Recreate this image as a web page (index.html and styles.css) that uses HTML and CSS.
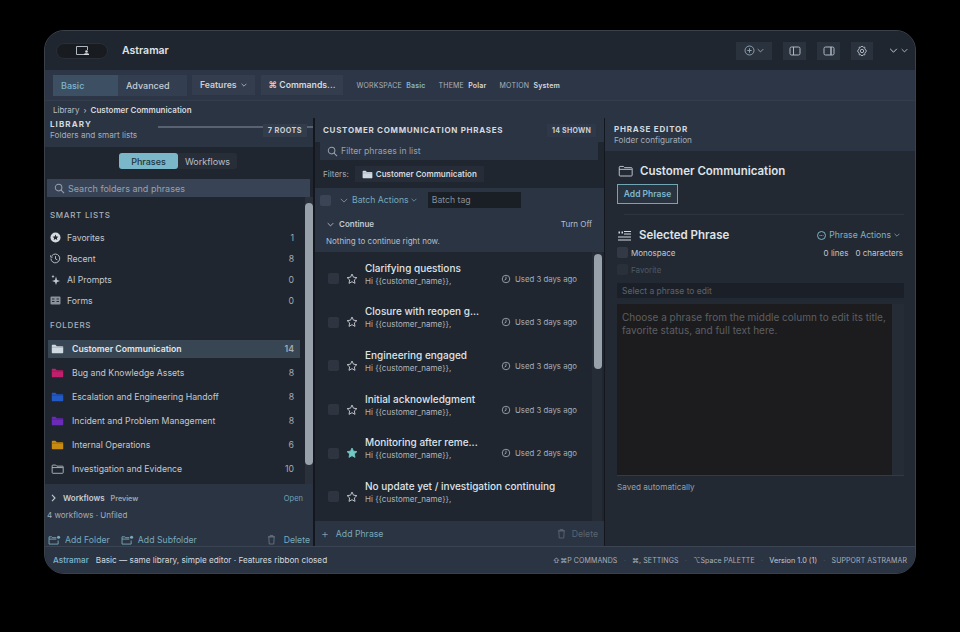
FILE: index.html
```html
<!DOCTYPE html>
<html lang="en">
<head>
  <meta charset="UTF-8" />
  <title>Astramar</title>
  <link rel="stylesheet" href="styles.css">
</head>
<body>
  <svg class="defs" width="0" height="0">
    <symbol id="folder" viewBox="0 0 18 14"><path d="M1 3V2a1 1 0 0 1 1-1h4l2 2h8a1 1 0 0 1 1 1v8a1 1 0 0 1-1 1H2a1 1 0 0 1-1-1z" fill="currentColor"/><path d="M1 4.500h16" stroke="#00000040"/></symbol>
    <symbol id="folder-line" viewBox="0 0 18 14"><path d="M1.500 12V2.500a1 1 0 0 1 1-1h4l1.500 1.500h8a1 1 0 0 1 1 1V12a1 1 0 0 1-1 1h-13.500a1 1 0 0 1-1-1zM1.500 5h15" fill="none" stroke="currentColor" stroke-width="1.100"/></symbol>
    <symbol id="star" viewBox="0 0 14 14"><path d="M7 1.200l1.700 3.700 4 .5-3 2.700.8 4L7 10.100l-3.500 2 .8-4-3-2.700 4-.5z" fill="none" stroke="currentColor" stroke-width="1.100" stroke-linejoin="round"/></symbol>
    <symbol id="star-fill" viewBox="0 0 14 14"><path d="M7 1.200l1.700 3.700 4 .5-3 2.700.8 4L7 10.100l-3.500 2 .8-4-3-2.700 4-.5z" fill="currentColor" stroke="currentColor" stroke-linejoin="round"/></symbol>
    <symbol id="clock" viewBox="0 0 12 12"><circle cx="6" cy="6" r="4.500" fill="none" stroke="currentColor"/><path d="M6 3.200V6.300L4.200 7.300" fill="none" stroke="currentColor"/></symbol>
    <symbol id="search" viewBox="0 0 12 12"><circle cx="5" cy="5" r="3.600" fill="none" stroke="currentColor" stroke-width="1.100"/><path d="M7.700 7.700L11 11" stroke="currentColor" stroke-width="1.100"/></symbol>
    <symbol id="chev" viewBox="0 0 10 6"><path d="M1 1l4 4 4-4" fill="none" stroke="currentColor" stroke-width="1.200"/></symbol>
    <symbol id="add-folder" viewBox="0 0 14 11"><path d="M1 10V2h3l1 1h4M1 4.500h8M1 10h10V6" fill="none" stroke="currentColor"/><circle cx="11.500" cy="2.500" r="1.700" fill="currentColor"/></symbol>
    <symbol id="trash" viewBox="0 0 10 12"><path d="M1 3h8M3.500 3V1.500h3V3M2 3l.5 8h5L8 3z" fill="none" stroke="currentColor"/></symbol>
  </svg>

  <div class="window">
    <header class="titlebar">
      <div class="sidebar-pill">
        <svg width="15" height="11" viewBox="0 0 15 11"><path d="M10 9.500H1.500v-8h11V5" fill="none" stroke="#aeb6c0"/><circle cx="11.500" cy="6.500" r="1.300" fill="#d5dae0"/><path d="M9 10h5V9l-1-.8h-3L9 9z" fill="#d5dae0"/></svg>
      </div>
      <div class="app-name">Astramar</div>
      <div class="title-tools">
        <div class="tool tool-wide">
          <svg width="11" height="11" viewBox="0 0 11 11"><circle cx="5.500" cy="5.500" r="4.500" fill="none" stroke="#8c9fb0"/><path d="M5.500 3.300v4.400M3.300 5.500h4.400" stroke="#8c9fb0"/></svg>
          <svg class="chev-sm" width="7" height="5"><use href="#chev"/></svg>
        </div>
        <div class="tool"><svg width="12" height="10" viewBox="0 0 12 10"><rect x="1" y="1" width="10" height="8" rx="1.500" fill="none" stroke="#aeb6c0"/><path d="M4.500 1v8" stroke="#aeb6c0"/></svg></div>
        <div class="tool"><svg width="12" height="10" viewBox="0 0 12 10"><rect x="1" y="1" width="10" height="8" rx="1.500" fill="none" stroke="#aeb6c0"/><path d="M8 1v8" stroke="#aeb6c0" stroke-width="1.500"/></svg></div>
        <div class="tool tool-gear"><svg width="12" height="12" viewBox="0 0 12 12"><circle cx="6" cy="6" r="1.700" fill="none" stroke="#aeb6c0"/><path d="M6 1l1.200 1.200h1.600v1.600L10.500 6 8.800 8.200v1.600H7.200L6 11 4.800 9.800H3.200V8.200L1.500 6l1.700-2.200V2.200h1.600z" fill="none" stroke="#aeb6c0"/></svg></div>
        <div class="win-chevs">
          <svg width="9" height="5"><use href="#chev"/></svg>
          <svg width="7" height="5"><use href="#chev"/></svg>
        </div>
      </div>
    </header>

    <div class="ribbon">
      <div class="segment"><span class="seg seg-on">Basic</span><span class="seg">Advanced</span></div>
      <div class="rib-btn">Features <svg class="chev-sm" width="6" height="4"><use href="#chev"/></svg></div>
      <div class="rib-btn rib-cmd">⌘ Commands...</div>
      <div class="rib-meta">WORKSPACE <b class="accent">Basic</b></div>
      <div class="rib-meta">THEME <b>Polar</b></div>
      <div class="rib-meta">MOTION <b>System</b></div>
    </div>

    <div class="crumbs"><span>Library</span><span class="crumb-sep">›</span><b>Customer Communication</b></div>

    <main class="columns">
      <section class="col col-left">
        <div class="col-head">
          <div>
            <div class="head-title">LIBRARY</div>
            <div class="head-sub">Folders and smart lists</div>
          </div>
          <div class="head-rule"></div>
          <div class="head-badge">7 ROOTS</div>
        </div>
        <div class="tabs"><span class="tab tab-on">Phrases</span><span class="tab">Workflows</span></div>
        <div class="lib-search">
          <svg width="11" height="11"><use href="#search"/></svg>Search folders and phrases
        </div>
        <div class="lib-scroll">
          <div class="lib-list">
            <div class="group-label">SMART LISTS</div>
            <div class="smart-row">
              <svg width="11" height="11" viewBox="0 0 11 11"><circle cx="5.500" cy="5.500" r="5" fill="#d5dae0"/><path d="M5.500 2.600l.9 1.900 2 .2-1.500 1.400.4 2-1.800-1-1.800 1 .4-2L2.600 4.700l2-.2z" fill="#20262f"/></svg>
              <span class="row-name">Favorites</span><span class="row-num">1</span>
            </div>
            <div class="smart-row">
              <svg width="11" height="11" viewBox="0 0 12 12"><path d="M2 3a4.800 4.800 0 1 1-1 3M.8 2.500V4.500h2" fill="none" stroke="#c3c9d0"/><path d="M6 3.400v3l2 1" fill="none" stroke="#c3c9d0"/></svg>
              <span class="row-name">Recent</span><span class="row-num">8</span>
            </div>
            <div class="smart-row">
              <svg width="11" height="11" viewBox="0 0 11 11"><path d="M6 2.500L7 6l3 1-3 1-1 3-1-3-3-1 3-1zM3 .8l.5 1.300 1 .4-1 .4L3 4.200l-.5-1.300-1-.4 1-.4z" fill="#c3c9d0"/></svg>
              <span class="row-name">AI Prompts</span><span class="row-num">0</span>
            </div>
            <div class="smart-row">
              <svg width="11" height="9" viewBox="0 0 11 9"><rect x=".5" y=".5" width="10" height="8" rx="1" fill="#8b929b"/><path d="M2 3h2.500M2 5.500h2.500M6.500 3H9M6.500 5.500H9" stroke="#262c35"/></svg>
              <span class="row-name">Forms</span><span class="row-num">0</span>
            </div>
            <div class="group-label group-folders">FOLDERS</div>
            <div class="folder-row folder-on">
              <svg class="f-white" width="13" height="10"><use href="#folder"/></svg>
              <span class="row-name">Customer Communication</span><span class="row-num">14</span>
            </div>
            <div class="folder-row">
              <svg class="f-pink" width="13" height="10"><use href="#folder"/></svg>
              <span class="row-name">Bug and Knowledge Assets</span><span class="row-num">8</span>
            </div>
            <div class="folder-row">
              <svg class="f-blue" width="13" height="10"><use href="#folder"/></svg>
              <span class="row-name">Escalation and Engineering Handoff</span><span class="row-num">8</span>
            </div>
            <div class="folder-row">
              <svg class="f-purple" width="13" height="10"><use href="#folder"/></svg>
              <span class="row-name">Incident and Problem Management</span><span class="row-num">8</span>
            </div>
            <div class="folder-row">
              <svg class="f-amber" width="13" height="10"><use href="#folder"/></svg>
              <span class="row-name">Internal Operations</span><span class="row-num">6</span>
            </div>
            <div class="folder-row">
              <svg class="f-line" width="13" height="10"><use href="#folder-line"/></svg>
              <span class="row-name">Investigation and Evidence</span><span class="row-num">10</span>
            </div>
          </div>
          <div class="lib-bar"><div class="lib-thumb"></div></div>
        </div>
        <div class="workflows">
          <div class="wf-top">
            <svg class="wf-chev" width="5" height="8" viewBox="0 0 5 8"><path d="M1 .8L4 4 1 7.200" fill="none" stroke="#c3c9d0" stroke-width="1.100"/></svg>
            <b>Workflows</b><span class="wf-tag">Preview</span><span class="wf-open">Open</span>
          </div>
          <div class="wf-sub">4 workflows · Unfiled</div>
          <div class="lib-actions">
            <span class="act"><svg width="13" height="10"><use href="#add-folder"/></svg>Add Folder</span>
            <span class="act"><svg width="13" height="10"><use href="#add-folder"/></svg>Add Subfolder</span>
            <span class="act act-del"><svg class="icon-grey" width="9" height="11"><use href="#trash"/></svg>Delete</span>
          </div>
        </div>
      </section>

      <section class="col col-mid">
        <div class="mid-head">
          <div class="head-title">CUSTOMER COMMUNICATION PHRASES</div>
          <div class="head-badge">14 SHOWN</div>
        </div>
        <div class="mid-search"><svg width="11" height="11"><use href="#search"/></svg>Filter phrases in list</div>
        <div class="filters">
          <span>Filters:</span>
          <span class="filter-chip"><svg class="f-white" width="11" height="9"><use href="#folder"/></svg>Customer Communication</span>
        </div>
        <div class="batch">
          <span class="check check-batch"></span>
          <svg class="chev-batch" width="8" height="5"><use href="#chev"/></svg>
          <span class="batch-label">Batch Actions</span>
          <svg class="chev-accent" width="6" height="4"><use href="#chev"/></svg>
          <span class="batch-tag">Batch tag</span>
        </div>
        <div class="continue">
          <div class="continue-top">
            <svg width="7" height="5"><use href="#chev"/></svg><b>Continue</b><span class="turn-off">Turn Off</span>
          </div>
          <div class="continue-note">Nothing to continue right now.</div>
        </div>
        <div class="phrase-scroll">
          <div class="phrases" id="phrases"></div>
          <div class="phrase-bar"><div class="phrase-thumb"></div></div>
        </div>
        <div class="mid-foot">
          <span class="add-phrase"><span class="plus">+</span>Add Phrase</span>
          <span class="del-off"><svg width="9" height="11"><use href="#trash"/></svg>Delete</span>
        </div>
      </section>

      <section class="col col-right">
        <div class="right-head">
          <div class="head-title">PHRASE EDITOR</div>
          <div class="head-sub">Folder configuration</div>
        </div>
        <div class="right-body">
          <div class="folder-title"><svg class="f-line" width="15" height="12"><use href="#folder-line"/></svg>Customer Communication</div>
          <div class="add-btn">Add Phrase</div>
          <div class="divider"></div>
          <div class="selected-top">
            <svg width="13" height="11" viewBox="0 0 13 11"><path d="M6 1.500h7M6 4h7M0 7h13M0 10h13" stroke="#d5dae0" stroke-width="1.100"/><path d="M.5 1.500h1.500v2H.5zM3.500 1.500h1.500v2H3.500z" fill="#d5dae0"/></svg>
            <span class="selected-title">Selected Phrase</span>
            <span class="phrase-actions">
              <svg width="9" height="9" viewBox="0 0 9 9"><circle cx="4.500" cy="4.500" r="4" fill="none" stroke="#7fb3c4"/><path d="M2.500 4.500h4" stroke="#7fb3c4" stroke-dasharray="1 .8"/></svg>
              Phrase Actions
              <svg width="6" height="4"><use href="#chev"/></svg>
            </span>
          </div>
          <div class="opt-row">
            <span class="check check-sm"></span><span>Monospace</span>
            <span class="counts"><span>0 lines</span><span>0 characters</span></span>
          </div>
          <div class="opt-row opt-off"><span class="check check-sm check-dim"></span><span>Favorite</span></div>
          <div class="title-field">Select a phrase to edit</div>
          <div class="text-field">
            <div class="text-area">Choose a phrase from the middle column to edit its title, favorite status, and full text here.</div>
            <div class="text-bar"></div>
          </div>
          <div class="saved">Saved automatically</div>
        </div>
      </section>
    </main>

    <footer class="statusbar">
      <span class="st-name">Astramar</span>
      <span class="st-msg">Basic — same library, simple editor · Features ribbon closed</span>
      <span class="st-right">
        <span>⇧⌘P COMMANDS</span><i>·</i><span>⌘, SETTINGS</span><i>·</i><span>⌥Space PALETTE</span><i>·</i><span class="st-ver">Version 1.0 (1)</span><i>·</i><span>SUPPORT ASTRAMAR</span>
      </span>
    </footer>
  </div>

  <script>
    const items = [
      ['Clarifying questions', '3', false],
      ['Closure with reopen g...', '3', false],
      ['Engineering engaged', '3', false],
      ['Initial acknowledgment', '3', false],
      ['Monitoring after reme...', '2', true],
      ['No update yet / investigation continuing', '', false]
    ];
    document.getElementById('phrases').innerHTML = items.map(p => `
      <div class="phrase">
        <span class="check"></span>
        <svg class="${p[2] ? 'star-on' : 'star'}" width="12" height="12"><use href="#${p[2] ? 'star-fill' : 'star'}"/></svg>
        <div class="phrase-text">
          <div class="phrase-title">${p[0]}</div>
          <div class="phrase-sub">Hi {{customer_name}},</div>
        </div>
        ${p[1] ? `<div class="used"><svg width="10" height="10"><use href="#clock"/></svg>Used ${p[1]} days ago</div>` : ''}
      </div>`).join('');
  </script>
</body>
</html>
```

FILE: styles.css
```css
* {
  box-sizing: border-box;
}
html, body {
  height: 100%;
}
body {
  margin: 0;
  background: #000;
  font-family: Inter, "Liberation Sans", sans-serif;
  color: #c9ced5;
  font-size: 8.700px;
  padding: 30px 44px 58px;
  overflow: hidden;
}
.defs {
  position: absolute;
}
b {
  font-weight: 600;
}
.window {
  width: 872px;
  height: 544px;
  border-radius: 20px;
  overflow: hidden;
  background: #222933;
  border: 1px solid #3b4149;
  display: flex;
  flex-direction: column;
}

/* title bar */
.titlebar {
  height: 39px;
  flex: none;
  background: #20262f;
  display: flex;
  align-items: center;
  padding-left: 11px;
}
.sidebar-pill {
  width: 52px;
  height: 16px;
  background: #181b20;
  border-radius: 8px;
  border: 1px solid #2a2f37;
  display: flex;
  align-items: center;
  justify-content: center;
}
.app-name {
  margin-left: 14px;
  font-size: 10.500px;
  font-weight: 600;
  color: #dfe3e8;
}
.title-tools {
  margin-left: auto;
  display: flex;
  align-items: center;
  gap: 11px;
  padding-right: 7px;
}
.tool {
  width: 23px;
  height: 18px;
  background: #2a323e;
  display: flex;
  align-items: center;
  justify-content: center;
  gap: 2px;
  color: #a8b2bd;
}
.tool-wide {
  width: 36px;
}
.tool-gear {
  width: 22px;
}
.win-chevs {
  display: flex;
  align-items: center;
  gap: 3px;
  margin-left: 5px;
  color: #c3c9d0;
}

/* ribbon */
.ribbon {
  height: 30px;
  flex: none;
  background: #2d3646;
  display: flex;
  align-items: center;
  padding-left: 8px;
}
.segment {
  display: flex;
  height: 21px;
  width: 134px;
  background: #333e50;
  font-size: 9px;
  font-weight: 500;
}
.seg {
  flex: 1;
  display: flex;
  align-items: center;
  padding-left: 8px;
}
.seg-on {
  flex: none;
  width: 65px;
  background: #3d5063;
  color: #7fb7cf;
}
.rib-btn {
  height: 20px;
  margin-left: 5px;
  padding: 0 8px;
  background: #333d4e;
  display: flex;
  align-items: center;
  gap: 4px;
  font-weight: 600;
  color: #c9ced5;
}
.rib-cmd {
  margin-left: 6px;
  color: #d5d9de;
}
.rib-meta {
  margin-left: 13px;
  font-size: 7px;
  letter-spacing: .2px;
  color: #aab2bc;
  white-space: nowrap;
}
.rib-meta b {
  margin-left: 2px;
  color: #d5d9de;
}
.rib-meta .accent {
  color: #7fb7cf;
}

/* breadcrumbs */
.crumbs {
  height: 18px;
  flex: none;
  background: #2b3443;
  display: flex;
  align-items: center;
  gap: 4px;
  padding-left: 8px;
  font-size: 8px;
  color: #b9bfc7;
  border-top: 1px solid #343d4c;
}
.crumbs b {
  color: #d5d9de;
}

/* columns */
.columns {
  flex: 1;
  min-height: 0;
  display: flex;
}
.col {
  display: flex;
  flex-direction: column;
  min-height: 0;
}
.col-left {
  width: 270px;
  background: #20262f;
  border-right: 2px solid #14181e;
}
.col-mid {
  width: 290px;
  background: #20262f;
  border-right: 1px solid #14181e;
}
.col-right {
  flex: 1;
  background: #222933;
}
.col-head {
  height: 29px;
  flex: none;
  background: #2b3443;
  display: flex;
  align-items: flex-start;
  padding: 1px 6px 0 5px;
  position: relative;
}
.head-title {
  font-size: 8px;
  font-weight: 700;
  letter-spacing: 1.100px;
  color: #d5d9de;
  white-space: nowrap;
}
.head-sub {
  margin-top: 1px;
  font-size: 8.200px;
  color: #a6adb6;
}
.head-rule {
  position: absolute;
  left: 113px;
  right: 0;
  top: 8px;
  height: 2px;
  background: #596270;
}
.head-badge {
  margin-left: auto;
  margin-top: 5px;
  background: #323c4b;
  padding: 2px 5px;
  font-size: 7.300px;
  font-weight: 700;
  letter-spacing: .4px;
  color: #c9ced5;
  white-space: nowrap;
  position: relative;
}
.tabs {
  display: flex;
  justify-content: center;
  padding: 6px 2px 0 0;
  flex: none;
}
.tab {
  width: 59px;
  height: 16px;
  display: flex;
  align-items: center;
  justify-content: center;
  background: #282e38;
  font-size: 9px;
  color: #b9bfc7;
  border-radius: 0 3px 3px 0;
}
.tab-on {
  background: #7ab8c9;
  color: #1d3540;
  border-radius: 3px;
  font-weight: 500;
}
.lib-search {
  height: 18px;
  flex: none;
  margin: 10px 3px 0 2px;
  background: #394356;
  display: flex;
  align-items: center;
  gap: 3px;
  padding-left: 7px;
  font-size: 9px;
  color: #98a1ac;
}
.lib-scroll {
  flex: 1;
  min-height: 0;
  display: flex;
  overflow: hidden;
}
.lib-list {
  flex: 1;
  min-width: 0;
  padding-top: 11px;
}
.group-label {
  font-size: 8px;
  font-weight: 500;
  letter-spacing: .7px;
  color: #a9b0b9;
  padding: 2px 0 0 5px;
  height: 15px;
}
.group-folders {
  margin-top: 7px;
}
.smart-row {
  height: 21px;
  display: flex;
  align-items: center;
  padding: 0 11px 0 5px;
  gap: 6px;
  color: #c3c8cf;
}
.group-label + .smart-row {
  margin-top: 4px;
}
.row-name {
  flex: 1;
  white-space: nowrap;
}
.row-num {
  color: #a4abb4;
}
.folder-row {
  height: 24px;
  margin: 0 5px 0 3px;
  padding: 0 6px 0 3px;
  display: flex;
  align-items: center;
  gap: 8px;
  color: #c3c8cf;
}
.group-folders + .folder-row {
  margin-top: 7px;
  height: 18px;
}
.group-folders + .folder-row + .folder-row {
  margin-top: 3px;
}
.folder-on {
  background: #384653;
  color: #e0e4e8;
  font-weight: 600;
}
.f-white { color: #cfd9e2; }
.f-pink { color: #c01f6d; }
.f-blue { color: #2259c4; }
.f-purple { color: #6a2cb8; }
.f-amber { color: #c98a12; }
.f-line { color: #c9ced5; }
.lib-bar {
  width: 8px;
  flex: none;
  background: #2a313b;
}
.lib-thumb {
  width: 8px;
  height: 262px;
  background: #98a0a9;
  border-radius: 4px;
  margin-top: 6px;
}
.workflows {
  height: 62px;
  flex: none;
  background: #2b3443;
  padding: 0 3px 0 2px;
  display: flex;
  flex-direction: column;
}
.wf-top {
  display: flex;
  align-items: center;
  gap: 7px;
  padding: 9px 0 0 4px;
  font-size: 8px;
}
.wf-top b {
  color: #c9ced5;
}
.wf-tag {
  margin-left: -1px;
  font-size: 7.200px;
  font-weight: 600;
  color: #9fa7b1;
}
.wf-open {
  margin-left: auto;
  margin-right: 7px;
  font-size: 7.500px;
  color: #6fa1b3;
}
.wf-sub {
  margin-top: 7px;
  font-size: 8px;
  color: #a6adb6;
}
.lib-actions {
  margin-top: auto;
  padding: 0 0 1px 1px;
  display: flex;
  color: #78a9ba;
}
.act {
  display: flex;
  align-items: center;
  gap: 4px;
  margin-right: 11px;
}
.act-del {
  margin-left: auto;
  margin-right: 0;
  gap: 8px;
}
.icon-grey {
  color: #69737f;
}

/* middle column */
.mid-head {
  height: 24px;
  flex: none;
  background: #2b3443;
  display: flex;
  align-items: center;
  padding: 0 8px 0 8px;
}
.mid-head .head-title {
  letter-spacing: .7px;
}
.mid-head .head-badge {
  margin-top: 0;
  background: #2f3848;
  font-size: 7px;
  letter-spacing: .25px;
}
.mid-search {
  height: 18px;
  flex: none;
  margin: 0 6px 0 5px;
  background: #2b3443;
  display: flex;
  align-items: center;
  gap: 3px;
  padding-left: 7px;
  color: #98a1ac;
}
.filters {
  height: 28px;
  flex: none;
  display: flex;
  align-items: center;
  gap: 6px;
  padding-left: 8px;
  font-size: 8.100px;
  color: #a6adb6;
}
.filter-chip {
  height: 16px;
  display: flex;
  align-items: center;
  gap: 3px;
  padding: 0 7px;
  background: #262d38;
  font-size: 8px;
  color: #d5d9de;
  font-weight: 600;
}
.batch {
  height: 24px;
  flex: none;
  background: #2b3443;
  display: flex;
  align-items: center;
  padding-left: 5px;
  color: #78a9ba;
}
.check {
  display: block;
  width: 11px;
  height: 11px;
  background: #333a45;
  border-radius: 2px;
  flex: none;
}
.check-batch {
  background: #3a4454;
  margin-right: 9px;
}
.chev-batch {
  color: #7f8b97;
  margin-right: 4px;
}
.chev-accent {
  margin-left: 2px;
}
.batch-tag {
  margin-left: 11px;
  width: 93px;
  height: 16px;
  background: #1a1e25;
  color: #878f99;
  display: flex;
  align-items: center;
  padding-left: 4px;
}
.continue {
  height: 40px;
  flex: none;
  background: #2b3443;
  padding: 7px 12px 0 12px;
  font-size: 8px;
}
.continue-top {
  display: flex;
  align-items: center;
  gap: 5px;
  color: #c3c8cf;
}
.turn-off {
  margin-left: auto;
  color: #b9bfc7;
}
.continue-note {
  margin: 7px 0 0 -1px;
  color: #b9bfc7;
}
.phrase-scroll {
  flex: 1;
  min-height: 0;
  display: flex;
  overflow: hidden;
  padding-left: 3px;
}
.phrases {
  flex: 1;
  min-width: 0;
  padding-top: 5px;
  background: #20262f;
}
.phrase {
  height: 43.600px;
  display: flex;
  align-items: center;
  padding: 0 0 0 10px;
  position: relative;
}
.phrase .check {
  background: #2e3540;
  margin-right: 7px;
}
.star { color: #c3c8cf; }
.star-on { color: #71c8c4; }
.phrase-text {
  margin-left: 7px;
  flex: none;
  position: relative;
  top: -5px;
}
.phrase-title {
  font-size: 10px;
  font-weight: 500;
  color: #dfe3e8;
  white-space: nowrap;
}
.phrase-sub {
  margin-top: 2px;
  font-size: 8px;
  color: #b0b6be;
}
.used {
  position: absolute;
  right: 15px;
  display: flex;
  align-items: center;
  gap: 4px;
  font-size: 7.800px;
  color: #a6adb6;
}
.phrase-bar {
  width: 10px;
  flex: none;
  background: #262c36;
  margin-right: 2px;
}
.phrase-thumb {
  width: 8px;
  height: 115px;
  margin: 2px 0 0 2px;
  background: #98a0a9;
  border-radius: 4px;
}
.mid-foot {
  height: 25px;
  flex: none;
  background: #2b3443;
  display: flex;
  align-items: center;
  padding: 0 6px 0 6px;
  color: #78a9ba;
}
.add-phrase {
  display: flex;
  align-items: center;
  gap: 7px;
}
.plus {
  font-size: 12px;
  font-weight: 300;
  color: #8d97a2;
}
.del-off {
  margin-left: auto;
  display: flex;
  align-items: center;
  gap: 6px;
  color: #5a6472;
}

/* editor column */
.right-head {
  height: 33px;
  flex: none;
  background: #2b3443;
  padding: 6px 0 0 9px;
}
.right-head .head-title {
  letter-spacing: .8px;
}
.right-body {
  flex: 1;
  padding: 0 11px 0 12px;
}
.folder-title {
  display: flex;
  align-items: center;
  gap: 7px;
  padding: 13px 0 0 1px;
  font-size: 11.500px;
  font-weight: 600;
  color: #dfe3e8;
}
.add-btn {
  margin-top: 6px;
  width: 61px;
  height: 20px;
  border: 1px solid #71a6b5;
  background: #2a3440;
  color: #7fb7cf;
  font-size: 8.500px;
  font-weight: 600;
  display: flex;
  align-items: center;
  justify-content: center;
}
.divider {
  margin: 10px 0 0 7px;
  height: 1px;
  background: #2d3440;
}
.selected-top {
  display: flex;
  align-items: center;
  gap: 8px;
  margin-top: 13px;
  padding-left: 1px;
}
.selected-title {
  font-size: 11.500px;
  font-weight: 600;
  color: #dfe3e8;
}
.phrase-actions {
  margin-left: auto;
  margin-right: 4px;
  display: flex;
  align-items: center;
  gap: 3px;
  color: #7fb3c4;
}
.opt-row {
  display: flex;
  align-items: center;
  gap: 3px;
  height: 17px;
  margin-top: 2px;
  font-size: 8px;
  color: #c3c8cf;
}
.opt-off {
  margin-top: 0;
  color: #505864;
}
.check-sm {
  background: #333a45;
}
.check-dim {
  background: #2a303a;
}
.counts {
  margin-left: auto;
  margin-right: 1px;
  display: flex;
  gap: 7px;
}
.title-field {
  margin-top: 5px;
  height: 15px;
  background: #1b2028;
  color: #5b636e;
  display: flex;
  align-items: center;
  padding-left: 5px;
  font-size: 8.500px;
}
.text-field {
  display: flex;
  margin-top: 6px;
  height: 172px;
  border-bottom: 1px solid #333a45;
}
.text-area {
  flex: 1;
  background: #1c1c1e;
  color: #5c5f63;
  font-size: 10px;
  line-height: 12.500px;
  padding: 7px 5px 0 5px;
}
.text-bar {
  width: 12px;
  background: #262c36;
}
.saved {
  margin-top: 6px;
  font-size: 8.200px;
  color: #98a0a9;
}

/* status bar */
.statusbar {
  height: 27px;
  flex: none;
  background: #2b3443;
  border-top: 1px solid #3b4452;
  display: flex;
  align-items: center;
  padding: 0 8px;
  font-size: 8.200px;
}
.st-name {
  color: #7fb7cf;
  font-weight: 500;
}
.st-msg {
  margin-left: 7px;
  color: #d5d9de;
}
.st-right {
  margin-left: auto;
  display: flex;
  gap: 6.200px;
  font-size: 7px;
  letter-spacing: .1px;
  color: #a9b0b9;
}
.st-right i {
  font-style: normal;
  color: #4d5561;
}
.st-ver {
  color: #c3c8cf;
  font-size: 7.300px;
  letter-spacing: 0;
}
```
